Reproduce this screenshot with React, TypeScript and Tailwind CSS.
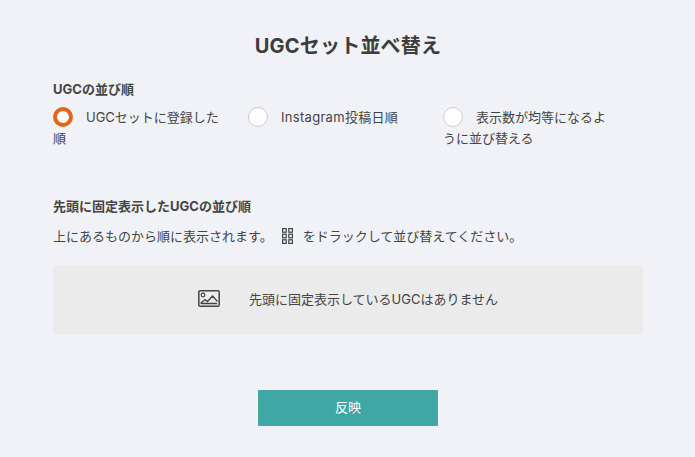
export default function App() {
  const options = [
    { label: 'UGCセットに登録した順', checked: true },
    { label: 'Instagram投稿日順', checked: false },
    { label: '表示数が均等になるように並び替える', checked: false },
  ];

  return (
    <div className="h-[457px] w-[695px] overflow-hidden bg-[#f0f2f7] pl-[53px] pr-[52px] pt-[32px] font-['Inter','Noto_Sans_CJK_JP',sans-serif] text-[#444]">
      <h1 className="h-[28px] text-center text-[20px] font-bold leading-[28px] tracking-[0.2px] text-[#3d3d3d]">UGCセット並べ替え</h1>

      <h2 className="mt-[20px] text-[13px] font-bold leading-[18px]">UGCの並び順</h2>
      <div className="mt-[9px] flex h-[90px]">
        {options.map(o => (
          <div key={o.label} className="w-[195px] pr-[25px] text-[13px] leading-[20.5px]">
            <span
              className={
                o.checked
                  ? 'mr-[13px] inline-block h-[20px] w-[20px] rounded-full border-[4px] border-[#e0661c] bg-white align-top'
                  : 'mr-[13px] inline-block h-[20px] w-[20px] rounded-full border border-[#cccccc] bg-white align-top'
              }
            />
            <span className={o.label.startsWith('Instagram') ? 'tracking-[0.3px]' : ''}>{o.label}</span>
          </div>
        ))}
      </div>

      <h2 className="text-[13px] font-bold leading-[18px]">先頭に固定表示したUGCの並び順</h2>
      <p className="mt-[11px] flex h-[20px] items-center text-[13px] leading-[20px]">
        上にあるものから順に表示されます。
        <svg className="ml-[9px] mr-[10px]" width="11" height="16" viewBox="0 0 11 16" fill="none" stroke="#444" strokeWidth="1.2">
          <rect x="0.6" y="0.6" width="3.6" height="3.6" />
          <rect x="6.8" y="0.6" width="3.6" height="3.6" />
          <rect x="0.6" y="6.2" width="3.6" height="3.6" />
          <rect x="6.8" y="6.2" width="3.6" height="3.6" />
          <rect x="0.6" y="11.8" width="3.6" height="3.6" />
          <rect x="6.8" y="11.8" width="3.6" height="3.6" />
        </svg>
        をドラックして並び替えてください。
      </p>

      <div className="mt-[19px] flex h-[69px] items-center rounded-[2px] bg-[#ebebeb] pl-[145px] text-[13px]">
        <svg className="mb-[2px] mr-[29px]" width="22" height="17" viewBox="0 0 22 17" fill="none" stroke="#444" strokeWidth="1.5">
          <rect x="0.8" y="0.8" width="20.4" height="15.4" rx="1.5" />
          <circle cx="5" cy="5" r="1.8" strokeWidth="1.2" />
          <path d="M2.5 13.5 L7 9.5 L9.5 11.5 L14.5 6 L19.5 11.5 M3 13.5 H19" strokeWidth="1.3" />
        </svg>
        先頭に固定表示しているUGCはありません
      </div>

      <div className="mt-[56px] flex justify-center">
        <button className="h-[36px] w-[180px] bg-[#3fa8a4] text-[13px] text-white">反映</button>
      </div>
    </div>
  );
}
